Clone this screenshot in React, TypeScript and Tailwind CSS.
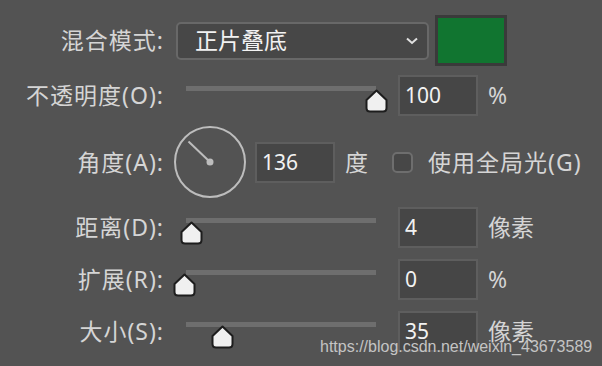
import React from "react";

const font = { fontFamily: '"Noto Sans", "Noto Sans CJK SC", sans-serif' };

function Thumb({ left }: { left: number }) {
  return (
    <svg
      className="absolute top-[14px]"
      style={{ left: left }}
      width="23"
      height="24"
      viewBox="0 0 23 24"
    >
      <path
        d="M11.5 1.5 L21.5 11 V19 Q21.5 22.5 18 22.5 H5 Q1.5 22.5 1.5 19 V11 Z"
        fill="#f0f0f0"
        stroke="#1d1d1d"
        strokeWidth="2"
        strokeLinejoin="round"
      />
    </svg>
  );
}

function Label({ children }: { children: React.ReactNode }) {
  return (
    <div className="w-[164px] shrink-0 text-right text-[23px] tracking-[1px] leading-none text-[#d5d5d5] whitespace-nowrap">
      {children}
    </div>
  );
}

function NumBox({ value }: { value: string }) {
  return (
    <div className="w-[80px] h-[41px] shrink-0 bg-[#464646] border-2 border-[#5e5e5e] flex items-center pl-[5px] text-[21px] text-[#f2f2f2] leading-none">
      {value}
    </div>
  );
}

function SliderRow({
  label,
  value,
  unit,
  thumb,
}: {
  label: string;
  value: string;
  unit: string;
  thumb: number;
}) {
  return (
    <div className="flex items-center h-[41px]">
      <Label>{label}</Label>
      <div className="relative ml-[22px] w-[190px] h-[41px] shrink-0">
        <div className="absolute left-0 top-[11px] w-[190px] h-[5px] bg-[#6e6e6e]" />
        <Thumb left={thumb} />
      </div>
      <div className="ml-[22px]">
        <NumBox value={value} />
      </div>
      <div className="ml-[10px] text-[23px] leading-none text-[#d5d5d5]">{unit}</div>
    </div>
  );
}

export default function App() {
  return (
    <div
      className="relative w-[602px] h-[366px] bg-[#535353] overflow-hidden pt-[15px]"
      style={font}
    >
      {/* Row 1 */}
      <div className="flex items-center h-[51px]">
        <Label>混合模式:</Label>
        <div className="ml-[12px] w-[253px] h-[38px] rounded-[5px] border-2 border-[#686868] bg-[#474747] flex items-center justify-between pl-[17px] pr-[9px]">
          <span className="text-[23px] leading-none text-[#f2f2f2]">正片叠底</span>
          <svg width="12" height="8" viewBox="0 0 12 8">
            <path d="M1 1.5 L6 6 L11 1.5" fill="none" stroke="#e0e0e0" strokeWidth="2" />
          </svg>
        </div>
        <div className="ml-[6px] w-[72px] h-[51px] border-[3px] border-[#3a3a3a] bg-[#117530]" />
      </div>

      {/* Row 2 */}
      <div className="mt-[9px]">
        <SliderRow label="不透明度(O):" value="100" unit="%" thumb={179} />
      </div>

      {/* Row 3 angle */}
      <div className="mt-[11px] flex items-center h-[70px]">
        <Label>角度(A):</Label>
        <svg className="ml-[9px] shrink-0" width="74" height="74" viewBox="0 0 74 74">
          <circle cx="37" cy="37" r="35" fill="none" stroke="#bdbdbd" strokeWidth="2" />
          <line x1="37" y1="37" x2="15.5" y2="16.5" stroke="#bdbdbd" strokeWidth="2" />
          <circle cx="37" cy="37" r="3.5" fill="#bdbdbd" />
        </svg>
        <div className="ml-[8px]">
          <NumBox value="136" />
        </div>
        <div className="ml-[10px] text-[23px] leading-none text-[#d5d5d5]">度</div>
        <div className="ml-[24px] w-[21px] h-[21px] rounded-[5px] border-2 border-[#6e6e6e] bg-[#474747]" />
        <div className="ml-[15px] text-[23px] tracking-[1px] leading-none text-[#d5d5d5] whitespace-nowrap">使用全局光(G)</div>
      </div>

      <div className="mt-[10px]">
        <SliderRow label="距离(D):" value="4" unit="像素" thumb={-6} />
      </div>
      <div className="mt-[11px]">
        <SliderRow label="扩展(R):" value="0" unit="%" thumb={-13} />
      </div>
      <div className="mt-[11px]">
        <SliderRow label="大小(S):" value="35" unit="像素" thumb={25} />
      </div>

      <div
        className="absolute left-[320px] top-[339px] text-[16px] leading-none text-[#c4c4c4] whitespace-nowrap"
        style={{ fontFamily: '"Liberation Sans", Arial, sans-serif' }}
      >
        https://blog.csdn.net/weixin_43673589
      </div>
    </div>
  );
}
